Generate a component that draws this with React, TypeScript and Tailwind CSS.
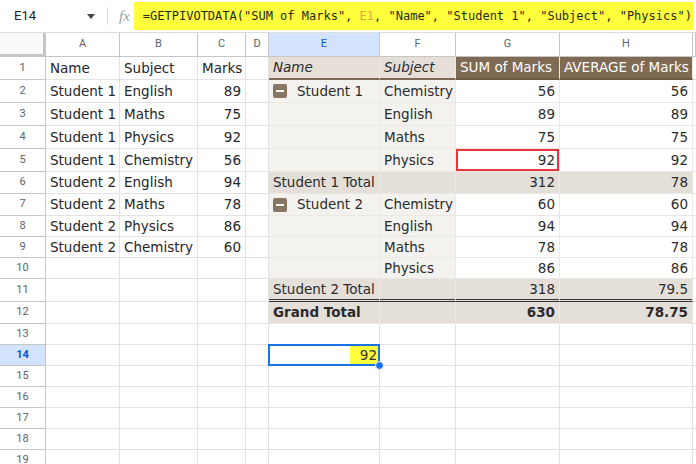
import { ReactNode } from "react";

type PCell = {
  text?: ReactNode;
  cls?: string;
  right?: boolean;
};

const GRID =
  "grid grid-cols-[46px_74px_78px_48px_23px_111px_76px_104px_133px_1fr]";

const letters = ["A", "B", "C", "D", "E", "F", "G", "H", ""];

const left: string[][] = [
  ["Name", "Subject", "Marks"],
  ["Student 1", "English", "89"],
  ["Student 1", "Maths", "75"],
  ["Student 1", "Physics", "92"],
  ["Student 1", "Chemistry", "56"],
  ["Student 2", "English", "94"],
  ["Student 2", "Maths", "78"],
  ["Student 2", "Physics", "86"],
  ["Student 2", "Chemistry", "60"],
];

const Minus = () => (
  <span className="mr-[10px] inline-flex h-[14px] w-[14px] items-center justify-center rounded-[2px] bg-[#8a7560]">
    <span className="h-[2px] w-[8px] bg-white" />
  </span>
);

const line = " border-b border-b-[#ebe8e4]";
const body = "bg-[#f4f2ef]" + line;
const white = "bg-white" + line;
const total = "bg-[#e4dfd9]" + line;
const dbl = "bg-[#e4dfd9] border-b-[3px] border-b-[#333] [border-bottom-style:double]";
const head = "bg-[#e5dfd8] border-b-2 border-b-[#7d6a55]";
const headDark = "bg-[#7f6a53] text-white border-b-2 border-b-[#6c5946]";

const pivot: PCell[][] = [
  [
    { text: <i>Name</i>, cls: head },
    { text: <i>Subject</i>, cls: head },
    { text: "SUM of Marks", cls: headDark },
    { text: "AVERAGE of Marks", cls: headDark },
  ],
  [
    { text: <span className="flex items-center"><Minus />Student 1</span>, cls: body },
    { text: "Chemistry", cls: body },
    { text: "56", right: true, cls: white },
    { text: "56", right: true, cls: white },
  ],
  [{ cls: body }, { text: "English", cls: body }, { text: "89", right: true, cls: white }, { text: "89", right: true, cls: white }],
  [{ cls: body }, { text: "Maths", cls: body }, { text: "75", right: true, cls: white }, { text: "75", right: true, cls: white }],
  [
    { cls: body },
    { text: "Physics", cls: body },
    { text: "92", right: true, cls: white + " shadow-[inset_0_0_0_2px_#e8353b]" },
    { text: "92", right: true, cls: white },
  ],
  [
    { text: "Student 1 Total", cls: total },
    { cls: total },
    { text: "312", right: true, cls: total },
    { text: "78", right: true, cls: total },
  ],
  [
    { text: <span className="flex items-center"><Minus />Student 2</span>, cls: body },
    { text: "Chemistry", cls: body },
    { text: "60", right: true, cls: white },
    { text: "60", right: true, cls: white },
  ],
  [{ cls: body }, { text: "English", cls: body }, { text: "94", right: true, cls: white }, { text: "94", right: true, cls: white }],
  [{ cls: body }, { text: "Maths", cls: body }, { text: "78", right: true, cls: white }, { text: "78", right: true, cls: white }],
  [{ cls: body }, { text: "Physics", cls: body }, { text: "86", right: true, cls: white }, { text: "86", right: true, cls: white }],
  [
    { text: "Student 2 Total", cls: dbl },
    { cls: dbl },
    { text: "318", right: true, cls: dbl },
    { text: "79.5", right: true, cls: dbl },
  ],
  [
    { text: "Grand Total", cls: total + " font-bold" },
    { cls: total },
    { text: "630", right: true, cls: total + " font-bold" },
    { text: "78.75", right: true, cls: total + " font-bold" },
  ],
];

const cellBase =
  "h-full border-r border-b border-[#e2e2e2] flex items-center px-[4px] overflow-hidden whitespace-nowrap";

const pivotBase =
  "h-full border-r border-r-[#ece9e5] flex items-center px-[4px] overflow-hidden whitespace-nowrap text-[#2b2b2b]";

// row heights as measured from the sheet
const heights = [
  "h-[23px]", "h-[23px]", "h-[23px]", "h-[23px]", "h-[23px]",
  "h-[22px]", "h-[22px]", "h-[21px]", "h-[21px]", "h-[21px]",
  "h-[23px]", "h-[22px]", "h-[21px]", "h-[21px]", "h-[21px]",
  "h-[21px]", "h-[21px]", "h-[21px]", "h-[21px]",
];

export default function App() {
  const rows = Array.from({ length: 19 }, (_, i) => i + 1);

  return (
    <div className="h-[464px] w-[696px] overflow-hidden bg-white font-['DejaVu_Sans',sans-serif] text-[13.5px] text-[#262626]">
      {/* formula bar */}
      <div className="flex h-[33px] items-center border-b border-[#dadce0]">
        <div className="flex w-[107px] items-center justify-between pl-[14px] pr-[12px] font-['Roboto',sans-serif] text-[13px] text-[#202124]">
          <span>E14</span>
          <svg width="8" height="5" viewBox="0 0 8 5">
            <path d="M0 0h8L4 5z" fill="#444" />
          </svg>
        </div>
        <div className="h-[18px] w-px bg-[#dadce0]" />
        <span className="ml-[11px] mr-[4px] font-['Liberation_Serif',serif] text-[15px] italic text-[#9aa0a6]">
          fx
        </span>
        <div className="flex h-[28px] flex-1 items-center bg-[#ffff3c] pl-[9px] font-['DejaVu_Sans_Mono',monospace] text-[12px] whitespace-nowrap text-[#1f2a1a]">
          =GETPIVOTDATA("SUM of Marks", <span className="text-[#e8a33a]">&nbsp;E1</span>, "Name", "Student 1", "Subject", "Physics")
        </div>
        <div className="w-[3px]" />
      </div>

      {/* column headers */}
      <div className={GRID + " h-[24px] font-['Roboto',sans-serif] text-[11px] text-[#5f6368]"}>
        <div className="h-full border-r-[3px] border-b-[3px] border-[#c4c7c5] bg-[#f8f9fa]" />
        {letters.map((l, i) => (
          <div
            key={i}
            className={
              "flex h-full items-center justify-center border-r border-b border-[#c4c7c5] " +
              (l === "E" ? "bg-[#d3e3fd] text-[#0b57d0]" : "bg-white")
            }
          >
            {l}
          </div>
        ))}
      </div>

      {/* rows */}
      {rows.map((r) => {
        const lrow = left[r - 1];
        const prow = pivot[r - 1];
        return (
          <div key={r} className={GRID + " " + heights[r - 1]}>
            <div
              className={
                "flex h-full items-center justify-center border-r border-b border-[#c4c7c5] font-['Roboto',sans-serif] text-[11px] " +
                (r === 14 ? "bg-[#d3e3fd] font-bold text-[#0b57d0]" : "bg-white text-[#5f6368]")
              }
            >
              {r}
            </div>
            {[0, 1, 2].map((c) => (
              <div key={c} className={cellBase + (c === 2 && r > 1 ? " justify-end" : "")}>
                {lrow ? lrow[c] : ""}
              </div>
            ))}
            <div className={cellBase} />
            {prow ? (
              prow.map((p, i) => (
                <div
                  key={i}
                  className={pivotBase + " " + (p.right ? "justify-end " : "") + (p.cls ?? "")}
                >
                  {p.text}
                </div>
              ))
            ) : r === 14 ? (
              <>
                <div className="relative h-full border-b border-[#e2e2e2]">
                  <div className="absolute -left-px -top-px h-[22px] w-[112px] border-2 border-[#1a73e8]">
                    <div className="ml-auto flex h-full w-[28px] items-center justify-end bg-[#ffff3c] pr-[1px] text-[#333]">
                      92
                    </div>
                  </div>
                  <div className="absolute -right-[4px] bottom-[-5px] h-[9px] w-[9px] rounded-full border border-white bg-[#1a73e8]" />
                </div>
                <div className={cellBase} />
                <div className={cellBase} />
                <div className={cellBase} />
              </>
            ) : (
              [0, 1, 2, 3].map((c) => <div key={c} className={cellBase} />)
            )}
            <div className="h-full border-b border-[#e2e2e2]" />
          </div>
        );
      })}
    </div>
  );
}
